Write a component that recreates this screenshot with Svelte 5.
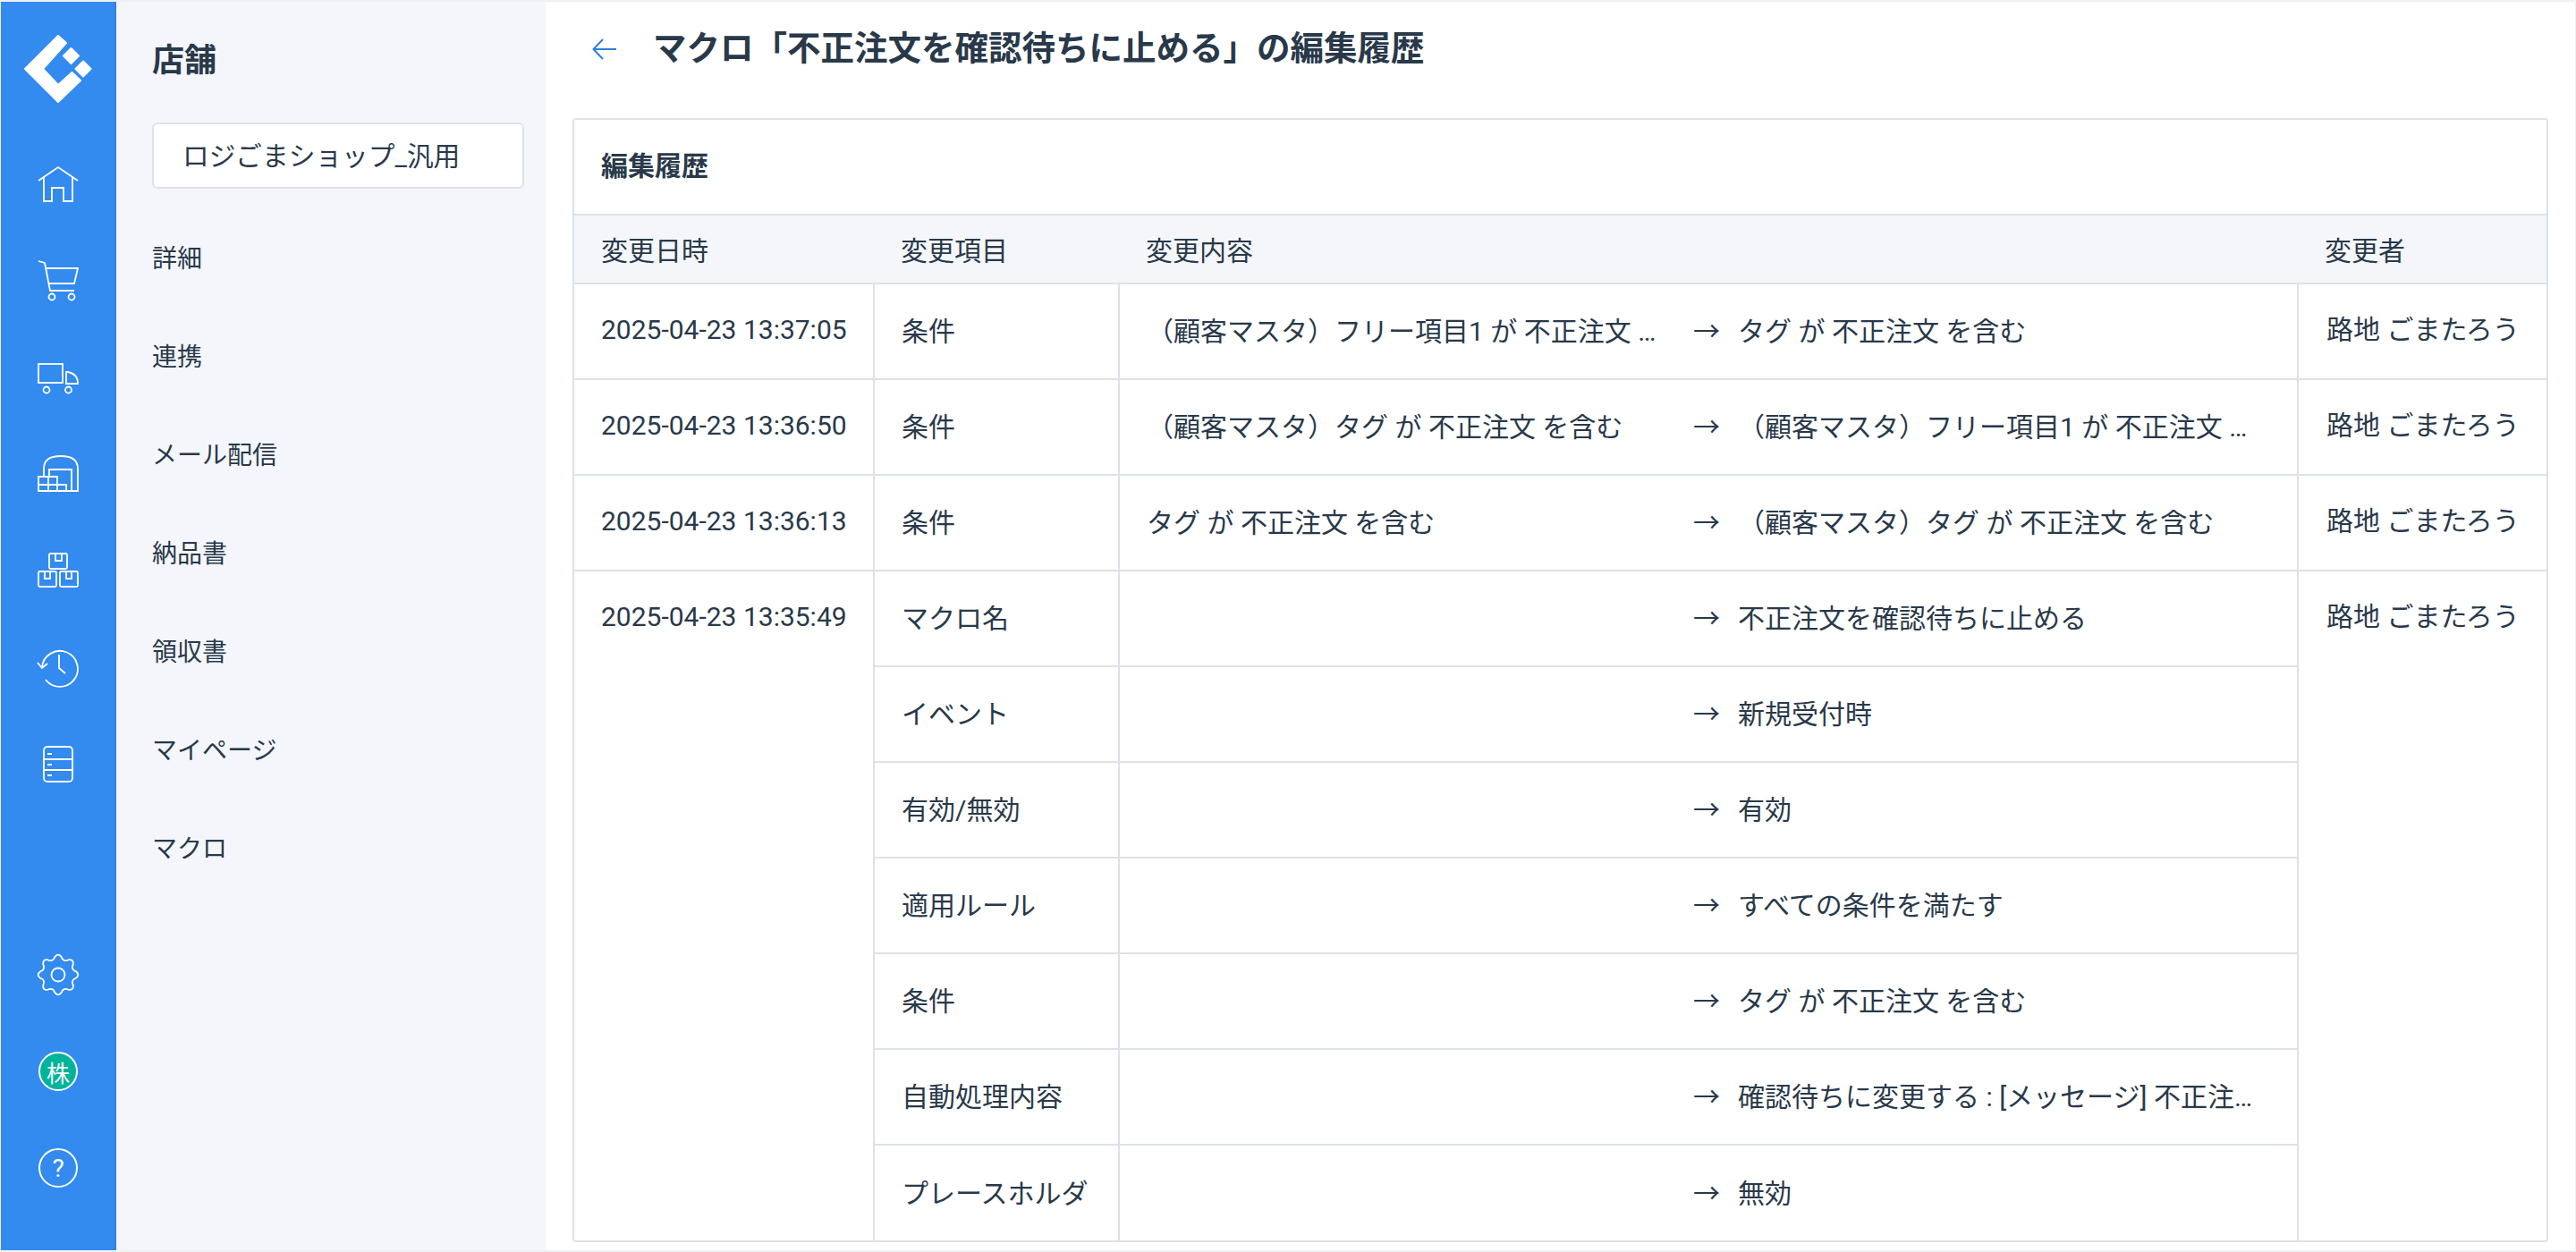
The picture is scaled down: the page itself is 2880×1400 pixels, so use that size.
<script lang="ts">
	type Row = { item: string; before?: string; after: string };
	type Group = { date: string; author: string; rows: Row[] };

	const menu = ['詳細', '連携', 'メール配信', '納品書', '領収書', 'マイページ', 'マクロ'];

	const groups: Group[] = [
		{
			date: '2025-04-23 13:37:05',
			author: '路地 ごまたろう',
			rows: [{ item: '条件', before: '（顧客マスタ）フリー項目1 が 不正注文 を含む', after: 'タグ が 不正注文 を含む' }]
		},
		{
			date: '2025-04-23 13:36:50',
			author: '路地 ごまたろう',
			rows: [{ item: '条件', before: '（顧客マスタ）タグ が 不正注文 を含む', after: '（顧客マスタ）フリー項目1 が 不正注文 を含む' }]
		},
		{
			date: '2025-04-23 13:36:13',
			author: '路地 ごまたろう',
			rows: [{ item: '条件', before: 'タグ が 不正注文 を含む', after: '（顧客マスタ）タグ が 不正注文 を含む' }]
		},
		{
			date: '2025-04-23 13:35:49',
			author: '路地 ごまたろう',
			rows: [
				{ item: 'マクロ名', after: '不正注文を確認待ちに止める' },
				{ item: 'イベント', after: '新規受付時' },
				{ item: '有効/無効', after: '有効' },
				{ item: '適用ルール', after: 'すべての条件を満たす' },
				{ item: '条件', after: 'タグ が 不正注文 を含む' },
				{ item: '自動処理内容', after: '確認待ちに変更する : [メッセージ] 不正注文の疑いがあります' },
				{ item: 'プレースホルダ', after: '無効' }
			]
		}
	];

	// 8 rounded teeth around the centre of a 48 box
	function gearPath() {
		const pt = (deg: number, r: number) => {
			const a = (deg * Math.PI) / 180;
			return `${(24 + r * Math.cos(a)).toFixed(2)} ${(24 + r * Math.sin(a)).toFixed(2)}`;
		};
		let d = `M${pt(-112.5, 17.5)}`;
		for (let i = 0; i < 8; i++) {
			const t = -90 + i * 45;
			d += ` Q${pt(t - 15, 17.5)} ${pt(t - 10, 20.5)} Q${pt(t, 24.5)} ${pt(t + 10, 20.5)} Q${pt(t + 15, 17.5)} ${pt(t + 22.5, 17.5)}`;
		}
		return d + 'Z';
	}
</script>

<div class="frame">
	<nav class="rail">
		<div class="logo">
			<svg width="76" height="76" viewBox="0 0 76 76" fill="#fff" stroke="#fff" stroke-width="2" stroke-linejoin="round">
				<path d="M38 1 L47 9 L21 38 L38 56 L53.500 42 L63 51 L38 75 L1 38Z" />
				<path d="M52.500 15 L61 23.500 L52.500 32 L44 23.500Z" />
				<path d="M66 29.500 L74.500 38 L66 46.500 L57.500 38Z" />
			</svg>
		</div>
		<div class="rail-group">
			<a class="slot" href="#home" aria-label="home">
				<svg class="ico" viewBox="0 0 48 48"><path d="M2 20 L24 5 L46 20 M8 16 V43 H17 V28 H30 V43 H40 V16" /></svg>
			</a>
			<a class="slot" href="#orders" aria-label="orders">
				<svg class="ico" viewBox="0 0 48 48">
					<path d="M2 2 L9 4 L15 35 H42 M10 10 H46 L42 27 H13" />
					<circle cx="17" cy="42" r="3.500" /><circle cx="39" cy="42" r="3.500" />
				</svg>
			</a>
			<a class="slot" href="#shipping" aria-label="shipping">
				<svg class="ico" viewBox="0 0 48 48">
					<rect x="2" y="9" width="27" height="21" />
					<path d="M33 18 H35 Q46 20 46 31 H33Z" />
					<circle cx="11" cy="38" r="3.500" /><circle cx="35.500" cy="38" r="3.500" />
				</svg>
			</a>
			<a class="slot" href="#warehouse" aria-label="warehouse">
				<svg class="ico" viewBox="0 0 48 48">
					<path d="M8 27 V18 Q8 4 27 4 Q46 4 46 18 V43 H2 V27 H23 V43 M2 36 H33 V43 M13 27 V43 M14 27 V19 H39 V43" />
				</svg>
			</a>
			<a class="slot" href="#stock" aria-label="stock">
				<svg class="ico" viewBox="0 0 48 48">
					<rect x="14" y="5" width="20" height="17" rx="1.500" /><path d="M21 5 V13 H28 V5" />
					<rect x="2" y="25" width="20" height="17" rx="1.500" /><path d="M9 25 V33 H15 V25" />
					<rect x="26" y="25" width="20" height="17" rx="1.500" /><path d="M33 25 V33 H39 V25" />
				</svg>
			</a>
			<a class="slot" href="#history" aria-label="history">
				<svg class="ico" viewBox="0 0 48 48">
					<path d="M6 24 A20 20 0 1 1 10 38 M1 19 L6 25 L12 20 M25 10 V25 L32 31" />
				</svg>
			</a>
			<a class="slot" href="#master" aria-label="master">
				<svg class="ico" viewBox="0 0 48 48">
					<rect x="8" y="5" width="32" height="39" rx="4" />
					<path d="M8 19 H40 M8 31 H40 M12 13 H17 M12 25 H17 M12 37 H17" />
				</svg>
			</a>
		</div>
		<div class="rail-group bottom">
			<a class="slot" href="#settings" aria-label="settings">
				<svg class="ico" viewBox="0 0 48 48"><path d={gearPath()} /><circle cx="24" cy="24" r="7.500" /></svg>
			</a>
			<a class="slot" href="#account"><span class="badge">株</span></a>
			<a class="slot" href="#help"><span class="help">?</span></a>
		</div>
	</nav>

	<aside class="side">
		<h2>店舗</h2>
		<div class="select">ロジごまショップ_汎用</div>
		<ul>
			{#each menu as label}
				<li>{label}</li>
			{/each}
		</ul>
	</aside>

	<main>
		<header>
			<svg class="back" width="28" height="24" viewBox="0 0 28 24" aria-hidden="true">
				<path d="M27 12 H2 M12 1 L1.500 12 L12 23" />
			</svg>
			<h1>マクロ「不正注文を確認待ちに止める」の編集履歴</h1>
		</header>

		<section class="card">
			<h3>編集履歴</h3>
			<table>
				<colgroup>
					<col class="c-date" />
					<col class="c-item" />
					<col />
					<col class="c-author" />
				</colgroup>
				<thead>
					<tr>
						<th>変更日時</th>
						<th>変更項目</th>
						<th>変更内容</th>
						<th>変更者</th>
					</tr>
				</thead>
				<tbody>
					{#each groups as group}
						{#each group.rows as row, i}
							<tr>
								{#if i === 0}
									<td class="top" rowspan={group.rows.length}>{group.date}</td>
								{/if}
								<td>{row.item}</td>
								<td class="change">
									<div class="diff">
										<span class="before">{row.before ?? ''}</span>
										<span class="arrow">→</span>
										<span class="after">{row.after}</span>
									</div>
								</td>
								{#if i === 0}
									<td class="top" rowspan={group.rows.length}>{group.author}</td>
								{/if}
							</tr>
						{/each}
					{/each}
				</tbody>
			</table>
		</section>
	</main>
</div>

<style>
	:global(body) {
		margin: 0;
		background: #fff;
	}

	.frame {
		display: flex;
		box-sizing: border-box;
		width: 2880px;
		height: 1400px;
		border: solid #eef0f2;
		border-width: 2px 1px;
		font-family: Roboto, 'Noto Sans CJK JP', sans-serif;
		font-size: 30px;
		color: #29394a;
		overflow: hidden;
	}

	.rail {
		display: flex;
		flex-direction: column;
		flex: 0 0 129px;
		padding-bottom: 38px;
		box-sizing: border-box;
		background: linear-gradient(90deg, #338aef 0, #338aef 97%, #2f80e4 100%);
	}

	.logo {
		display: flex;
		align-items: center;
		justify-content: center;
		flex: 0 0 150px;
		padding-right: 1px;
	}

	.rail-group {
		display: flex;
		flex-direction: column;
	}

	.rail-group.bottom {
		margin-top: auto;
	}

	.slot {
		display: flex;
		align-items: center;
		justify-content: center;
		height: 108px;
		padding-right: 1px;
		text-decoration: none;
	}

	.ico {
		width: 48px;
		height: 48px;
		fill: none;
		stroke: #fff;
		stroke-width: 1.8;
	}

	.badge,
	.help {
		display: flex;
		align-items: center;
		justify-content: center;
		box-sizing: border-box;
		width: 44px;
		height: 44px;
		border: 2px solid #fff;
		border-radius: 50%;
		color: #fff;
	}

	.badge {
		background: #00b39b;
		font-size: 26px;
	}

	.help {
		font-size: 28px;
	}

	.side {
		flex: 0 0 480px;
		box-sizing: border-box;
		padding: 0 24px 0 40px;
		background: #f4f6fb;
	}

	.side h2 {
		margin: 0;
		height: 135px;
		line-height: 133px;
		font-size: 36px;
		font-weight: 700;
	}

	.select {
		box-sizing: border-box;
		height: 74px;
		padding-left: 32px;
		border: 2px solid #dde2e8;
		border-radius: 6px;
		background: #fff;
		line-height: 72px;
		font-size: 29.700px;
	}

	ul {
		margin: 24px 0 0;
		padding: 0;
		list-style: none;
	}

	li {
		height: 110px;
		line-height: 110px;
		font-size: 28px;
	}

	main {
		flex: 1;
		min-width: 0;
		padding: 0 30px;
	}

	header {
		display: flex;
		align-items: center;
		height: 106px;
		margin-bottom: 24px;
		padding-left: 22px;
	}

	.back {
		flex: none;
		fill: none;
		stroke: #2f7fdc;
		stroke-width: 2;
	}

	h1 {
		margin: -9px 0 0 40px;
		font-size: 37.500px;
		font-weight: 700;
	}

	.card {
		border: 2px solid #dde2e8;
		border-radius: 4px;
		background: #fff;
	}

	h3 {
		margin: 0;
		height: 105px;
		padding-left: 30px;
		line-height: 104px;
		font-size: 30px;
		font-weight: 700;
	}

	table {
		width: 100%;
		table-layout: fixed;
		border-collapse: collapse;
	}

	.c-date {
		width: 335px;
	}

	.c-item {
		width: 274px;
	}

	.c-author {
		width: 278px;
	}

	th {
		height: 73px;
		padding: 0 30px 2px;
		border-top: 2px solid #dde2e8;
		border-bottom: 2px solid #dde2e8;
		background: #f4f6fa;
		font-weight: 400;
		text-align: left;
	}

	td {
		height: 107px;
		box-sizing: border-box;
		padding: 0 30px 5px;
		border: 2px solid #dde2e8;
		white-space: nowrap;
	}

	tr td:first-child {
		border-left: 0;
	}

	tr td:last-child {
		border-right: 0;
	}

	tbody tr:last-child td,
	td.top {
		border-bottom: 0;
	}

	td.top {
		padding-top: 29px;
		padding-bottom: 0;
		vertical-align: top;
		line-height: 44px;
	}

	td:last-child.top {
		padding-left: 31px;
		padding-right: 20px;
	}

	.diff {
		display: flex;
		align-items: center;
	}

	.before,
	.after {
		overflow: hidden;
		white-space: nowrap;
		text-overflow: ellipsis;
	}

	.before {
		flex: 0 0 580px;
	}

	.arrow {
		flex: none;
		margin: 0 20px 0 31px;
	}

	.after {
		flex: 1;
		min-width: 0;
		padding-right: 10px;
	}
</style>
